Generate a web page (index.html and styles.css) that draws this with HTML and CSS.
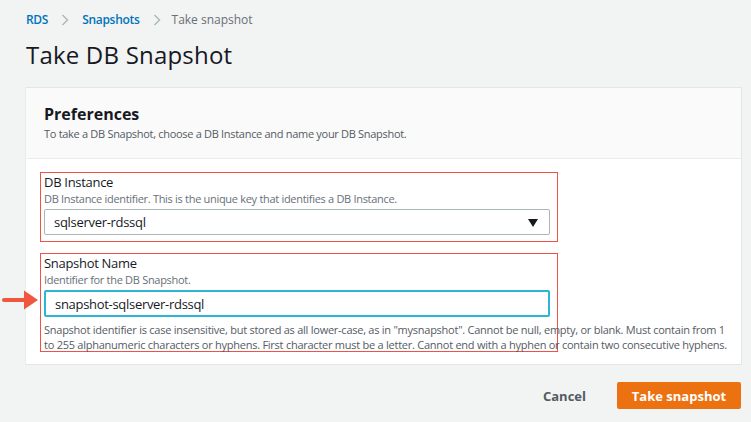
FILE: index.html
```html
<!DOCTYPE html>
<html>
<head>
<meta charset="utf-8">
<link rel="stylesheet" href="styles.css">
</head>
<body>
<div class="page">
  <nav class="crumbs">
    <a class="crumb-link">RDS</a>
    <svg class="chev" width="8" height="12" viewBox="0 0 8 12"><path d="M1.5 1 L6.5 6 L1.5 11" fill="none" stroke="#aab7b8" stroke-width="1.4"/></svg>
    <a class="crumb-link">Snapshots</a>
    <svg class="chev chev-2" width="8" height="12" viewBox="0 0 8 12"><path d="M1.5 1 L6.5 6 L1.5 11" fill="none" stroke="#aab7b8" stroke-width="1.4"/></svg>
    <span class="crumb-current">Take snapshot</span>
  </nav>
  <h1 class="title">Take DB Snapshot</h1>

  <section class="panel">
    <header class="panel-head">
      <h2 class="panel-title">Preferences</h2>
      <p class="panel-sub">To take a DB Snapshot, choose a DB Instance and name your DB Snapshot.</p>
    </header>
    <div class="panel-body">
      <div class="mark mark-1">
        <div class="label">DB Instance</div>
        <div class="desc">DB Instance identifier. This is the unique key that identifies a DB Instance.</div>
        <div class="select">
          <span>sqlserver-rdssql</span>
          <svg class="caret" width="10" height="8" viewBox="0 0 10 8"><path d="M0 0 H10 L5 8 Z" fill="#16191f"/></svg>
        </div>
      </div>
      <div class="mark mark-2">
        <svg class="arrow" width="36" height="20" viewBox="0 0 36 20"><path d="M2 10 H25" stroke="#f0573f" stroke-width="4" stroke-linecap="round"/><path d="M22 0.5 L36 10 L22 19.5 Z" fill="#f0573f"/></svg>
        <div class="label">Snapshot Name</div>
        <div class="desc">Identifier for the DB Snapshot.</div>
        <div class="input">snapshot-sqlserver-rdssql</div>
        <p class="help">Snapshot identifier is case insensitive, but stored as all lower-case, as in "mysnapshot". Cannot be null, empty, or blank. Must contain from 1 to 255 alphanumeric characters or hyphens. First character must be a letter. Cannot end with a hyphen or contain two consecutive hyphens.</p>
      </div>
    </div>
  </section>

  <div class="actions">
    <button class="btn-link">Cancel</button>
    <button class="btn-primary">Take snapshot</button>
  </div>
</div>
</body>
</html>
```

FILE: styles.css
```css
* { box-sizing: border-box; }
html, body { margin: 0; padding: 0; }
body {
  background: #f2f3f3;
  font-family: "Open Sans", "Noto Sans", sans-serif;
  color: #16191f;
  width: 751px;
  height: 422px;
  overflow: hidden;
  letter-spacing: -0.3px;
}
.page {
  padding: 12px 8px 0 25px;
}
.crumbs {
  display: flex;
  align-items: center;
  height: 16px;
  font-size: 12px;
  line-height: 16px;
  padding-left: 1px;
}
.crumb-link { color: #0073bb; font-weight: 600; }
.crumb-current { color: #687078; letter-spacing: 0; }
.chev { margin: 0 13px 0 13px; }
.chev-2 { margin: 0 11px 0 13px; }
.title {
  margin: 12px 0 0 1px;
  font-size: 24px;
  line-height: 30px;
  font-weight: 400;
  color: #16191f;
  letter-spacing: 0.2px;
}
.panel {
  margin-top: 17px;
  width: 717px;
  background: #fff;
  border: 1px solid #e3e6e6;
  border-left-color: #eaeded;
}
.panel-head {
  background: #fafafa;
  border-bottom: 1px solid #eaeded;
  padding: 15px 18px 17px;
  height: 71px;
}
.panel-title {
  margin: 0;
  font-size: 16px;
  line-height: 22px;
  font-weight: 700;
  letter-spacing: 0;
}
.panel-sub {
  margin: 1px 0 0;
  font-size: 11px;
  line-height: 15px;
  color: #545b64;
}
.panel-body {
  padding: 13px 0 12px 14px;
}
.mark {
  position: relative;
  width: 518px;
  border: 1px solid #ef5346;
  padding: 0 7px 0 3px;
}
.mark-1 { height: 70px; }
.mark-2 { height: 99px; margin-top: 11px; }
.label {
  font-size: 13px;
  line-height: 18px;
  color: #16191f;
}
.desc {
  font-size: 11px;
  line-height: 15px;
  color: #687078;
}
.select {
  margin-top: 3px;
  height: 26px;
  border: 1px solid #aab7b8;
  border-radius: 2px;
  display: flex;
  align-items: center;
  justify-content: space-between;
  padding: 0 11px 0 9px;
  font-size: 13px;
}
.caret { display: block; margin-top: 1px; }
.input {
  margin-top: 3px;
  height: 27px;
  border: 2px solid #2db5d6;
  border-radius: 2px;
  display: flex;
  align-items: center;
  padding: 0 9px;
  font-size: 13px;
}
.help {
  margin: 5px 0 0;
  width: 685px;
  font-size: 11px;
  line-height: 15px;
  color: #545b64;
  letter-spacing: -0.25px;
}
.arrow {
  position: absolute;
  left: -39px;
  top: 36px;
}
.actions {
  display: flex;
  justify-content: flex-end;
  align-items: center;
  width: 716px;
  margin-top: 17px;
}
.btn-link {
  border: none;
  background: none;
  font-family: inherit;
  font-size: 13px;
  font-weight: 700;
  color: #545b64;
  padding: 0;
  margin-right: 31px;
  letter-spacing: 0;
}
.btn-primary {
  border: none;
  background: #ec7211;
  color: #fff;
  font-family: inherit;
  font-size: 13px;
  font-weight: 700;
  height: 27px;
  width: 124px;
  border-radius: 2px;
  padding: 0;
  letter-spacing: 0;
}
```
